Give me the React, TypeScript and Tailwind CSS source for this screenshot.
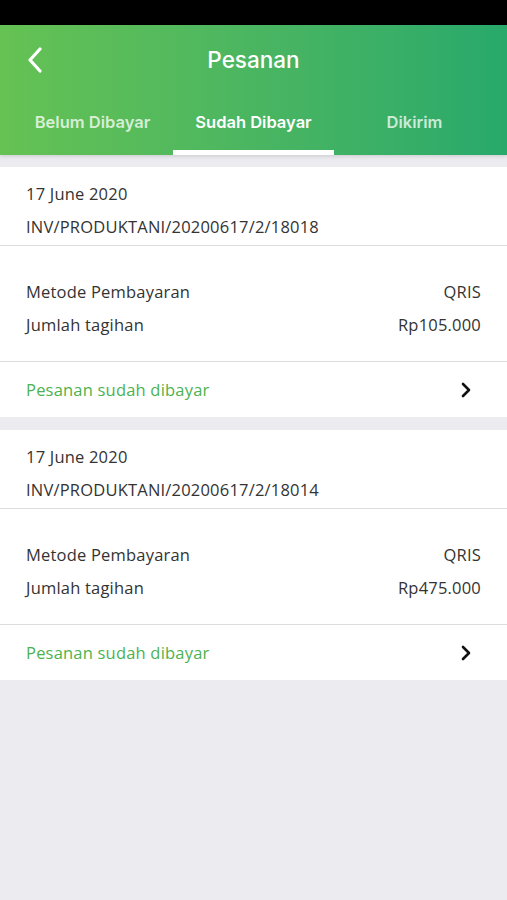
import React from "react";

function Chevron({ className }: { className?: string }) {
  return (
    <svg viewBox="0 0 10 16" className={className} fill="none" stroke="currentColor" strokeWidth={2.6} strokeLinecap="round" strokeLinejoin="round">
      <path d="M2 2 L8 8 L2 14" />
    </svg>
  );
}

function Card({ inv, amount }: { inv: string; amount: string }) {
  return (
    <div className="bg-white text-[16.5px] tracking-[0.2px] leading-[22px] text-[#333]">
      <div className="px-[26px] pt-[16px] pb-[7px] border-b border-[#dcdcdf] flex flex-col gap-[11px]">
        <div>17 June 2020</div>
        <div>{inv}</div>
      </div>
      <div className="px-[26px] pt-[35px] pb-[25px] border-b border-[#dcdcdf] flex flex-col gap-[11px]">
        <div className="flex justify-between">
          <span>Metode Pembayaran</span>
          <span>QRIS</span>
        </div>
        <div className="flex justify-between">
          <span>Jumlah tagihan</span>
          <span>{amount}</span>
        </div>
      </div>
      <div className="h-[55px] pl-[26px] pr-[36px] flex items-center justify-between">
        <span className="text-[#4db24f]">Pesanan sudah dibayar</span>
        <Chevron className="w-[10px] h-[16px] text-[#111]" />
      </div>
    </div>
  );
}

export default function App() {
  return (
    <div className="w-[507px] h-[900px] bg-[#ebebf0] flex flex-col" style={{ fontFamily: "'Open Sans', 'Noto Sans', sans-serif" }}>
      <div className="h-[25px] bg-black" />
      <div className="bg-gradient-to-r from-[#65c253] to-[#27a96b] shadow-[0_1px_4px_rgba(0,0,0,0.15)]">
        <div className="h-[70px] relative flex items-center justify-center">
          <svg viewBox="0 0 16 26" className="absolute left-[27px] top-[22px] w-[16px] h-[26px]" fill="none" stroke="white" strokeWidth={3.2} strokeLinecap="round" strokeLinejoin="round">
            <path d="M13 2 L3 13 L13 24" />
          </svg>
          <span className="text-white text-[22.5px] font-medium" style={{ fontFamily: "Inter, 'Liberation Sans', sans-serif" }}>Pesanan</span>
        </div>
        <div className="flex px-3 h-[60px]" style={{ fontFamily: "Inter, 'Liberation Sans', sans-serif" }}>
          <div className="flex-1 flex flex-col">
            <div className="h-[55px] flex items-center justify-center text-[16.5px] font-semibold text-white/75">Belum Dibayar</div>
          </div>
          <div className="flex-1 flex flex-col">
            <div className="h-[55px] flex items-center justify-center text-[16.5px] font-semibold text-white">Sudah Dibayar</div>
            <div className="h-[5px] bg-white" />
          </div>
          <div className="flex-1 flex flex-col">
            <div className="h-[55px] flex items-center justify-center text-[16.5px] font-semibold text-white/75">Dikirim</div>
          </div>
        </div>
      </div>
      <div className="flex flex-col gap-[13px] mt-[12px]">
        <Card inv="INV/PRODUKTANI/20200617/2/18018" amount="Rp105.000" />
        <Card inv="INV/PRODUKTANI/20200617/2/18014" amount="Rp475.000" />
      </div>
    </div>
  );
}
